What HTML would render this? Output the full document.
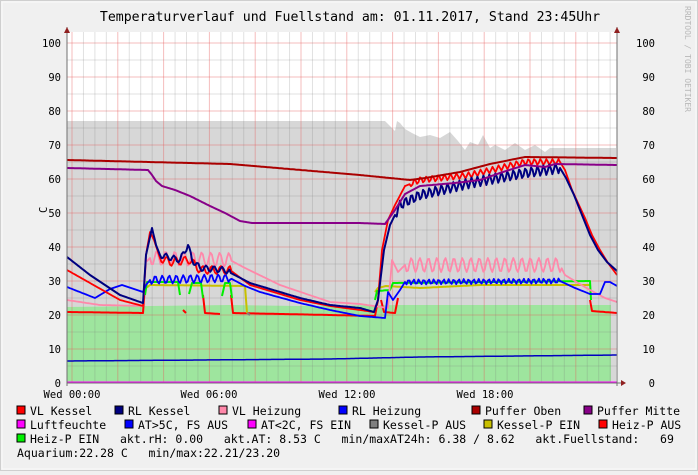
<!DOCTYPE html>
<html><head><meta charset="utf-8"><style>
html,body{margin:0;padding:0;background:#f0f0f0;}
body{width:698px;height:471px;overflow:hidden;position:relative;font-family:"DejaVu Sans Mono","Liberation Mono",monospace;}
svg text{font-family:"DejaVu Sans Mono","Liberation Mono",monospace;white-space:pre;}
</style></head><body>
<svg id="g" width="698" height="471" xmlns="http://www.w3.org/2000/svg">
<rect x="0" y="0" width="698" height="471" fill="#f0f0f0"/>
<rect x="0.5" y="0.5" width="697" height="470" fill="none" stroke="#cfcfcf"/>
<rect x="2" y="2" width="694" height="467" fill="none" stroke="#fafafa"/>
<text x="350" y="21" font-size="13.2" text-anchor="middle" fill="#000">Temperaturverlauf und Fuellstand am: 01.11.2017, Stand 23:45Uhr</text>
<text transform="translate(685,6) rotate(90)" font-size="8" fill="#b8b8b8">RRDTOOL / TOBI OETIKER</text>
<rect x="67" y="32" width="550" height="351" fill="#fff"/>
<g id="areas"></g>
<g id="grid"></g>
<g id="lines" fill="none" stroke-linejoin="round"></g>
<line x1="67" y1="383" x2="622" y2="383" stroke="#707070"/>
<line x1="67" y1="27" x2="67" y2="386" stroke="#707070"/>
<line x1="617" y1="27" x2="617" y2="386" stroke="#707070"/>
<polygon points="64,33 70,33 67,27" fill="#902020"/>
<polygon points="614,33 620,33 617,27" fill="#902020"/>
<polygon points="621,380 621,386 626,383" fill="#902020"/>
<g id="labels" font-size="10.5" fill="#000"></g>
<text x="38" y="210" font-size="10.5" transform="rotate(-90,44,207)">C</text>
<g font-size="10.5"><text x="72" y="398" text-anchor="middle">Wed 00:00</text><text x="209" y="398" text-anchor="middle">Wed 06:00</text><text x="347" y="398" text-anchor="middle">Wed 12:00</text><text x="485" y="398" text-anchor="middle">Wed 18:00</text></g>
<g id="legend" font-size="11.5" fill="#000"></g>
</svg>
<script>
var NS="http://www.w3.org/2000/svg";
function el(p,t,a){var e=document.createElementNS(NS,t);for(var k in a)e.setAttribute(k,a[k]);p.appendChild(e);return e;}
var Y=function(v){return 383-3.4*v;};
var grid=document.getElementById('grid');
for(var v=0;v<=100;v+=5){var y=Y(v);el(grid,'line',{x1:67,x2:617,y1:y,y2:y,stroke:v%10==0?'rgba(230,90,90,0.4)':'rgba(120,120,120,0.22)','stroke-width':1});}
for(var i=-1;i<50;i++){var x=72+i*11.45;if(x<67||x>617)continue;el(grid,'line',{x1:x,x2:x,y1:32,y2:383,stroke:i%4==0?'rgba(230,90,90,0.4)':'rgba(120,120,120,0.22)','stroke-width':1});}
var lab=document.getElementById('labels');
for(var v=0;v<=100;v+=10){var y=Y(v)+4;var t=el(lab,'text',{x:61,y:y,'text-anchor':'end'});t.textContent=v;var t2=el(lab,'text',{x:655,y:y,'text-anchor':'end'});t2.textContent=v;}
var ar=document.getElementById('areas');
var gp="67,383 67,121 ";
var gpts=[[385,121],[392,128],[395,131],[397,121],[400,123],[405,129],[412,133],[420,137],[430,135],[440,138],[450,132],[458,141],[465,150],[470,142],[478,145],[483,135],[490,148],[495,145],[505,150],[515,143],[525,150],[535,145],[545,152],[550,148],[555,148],[616,148],[616,383]];
gpts.forEach(function(p){gp+=p[0]+","+p[1]+" ";});
el(ar,'polygon',{points:gp,fill:'#d7d7d7'});
el(ar,'polygon',{points:"67,383 67,307 150,306 230,305 300,306 400,305 460,305 560,305 611,305 611,383",fill:'#9ee59e'});
var L=document.getElementById('lines');
function pl(pts,col,w,osc){
 var out=[];
 for(var i=0;i<pts.length-1;i++){var a=pts[i],b=pts[i+1];var n=Math.max(1,Math.round((b[0]-a[0])/1.5));
  for(var j=0;j<n;j++){var t=j/n;var x=a[0]+(b[0]-a[0])*t,y=a[1]+(b[1]-a[1])*t;
   if(osc)osc.forEach(function(o){if(x>=o[0]&&x<=o[1])y+=o[2]*Math.sin((x-o[0])/o[3]*2*Math.PI);});
   out.push(x.toFixed(1)+","+y.toFixed(1));}}
 var l=pts[pts.length-1];out.push(l[0]+","+l[1]);
 el(L,'polyline',{points:out.join(" "),stroke:col,'stroke-width':w||1.6});
}
pl([[67,361],[200,360],[330,359],[420,357],[617,355]],'#0000c0',1.5);
el(L,'line',{x1:67,x2:617,y1:382.5,y2:382.5,stroke:'#ff00ff','stroke-width':2});
pl([[67,312],[143,313],[145,285]],'#ff0000',2);
pl([[183,310],[186,313]],'#ff0000',2);
pl([[203,295],[205,313],[220,314]],'#ff0000',2);
pl([[231,295],[233,313],[330,315],[375,316],[378,300]],'#ff0000',2);
pl([[381,300],[384,312],[395,313],[398,298]],'#ff0000',2);
pl([[590,300],[592,311],[617,313]],'#ff0000',2);
pl([[146,288],[150,285],[245,286],[247,313]],'#c8c000',2);
pl([[375,292],[378,288],[386,286],[420,288],[480,285],[560,285],[590,285]],'#c8c000',2);
el(L,'line',{x1:247,x2:250,y1:313,y2:315,stroke:'#808080','stroke-width':2});
pl([[145,295],[147,282],[178,282],[180,295]],'#00f000',2);
pl([[189,294],[192,283],[201,283],[203,298]],'#00f000',2);
pl([[222,296],[225,283],[230,283],[232,298]],'#00f000',2);
pl([[375,300],[377,291],[390,290],[393,283],[590,281],[591,300]],'#00f000',2);
pl([[67,300],[100,305],[143,306],[146,262],[150,258],[230,260],[245,268],[280,285],[330,302],[360,304],[388,308],[392,260],[398,272],[405,265],[560,265],[565,275],[578,283],[590,290],[605,298],[617,302]],'#ff88aa',1.8,[[150,230,7,9],[405,560,7,8.5]]);
pl([[67,287],[95,298],[110,289],[122,285],[143,292],[146,285],[150,280],[230,278],[245,286],[260,292],[300,303],[330,310],[360,316],[385,318],[388,292],[393,300],[400,290],[405,282],[560,281],[575,288],[590,294],[600,294],[605,282],[610,282],[617,286]],'#0000ff',1.8,[[150,230,4,7],[405,560,2.5,5]]);
pl([[67,270],[90,283],[120,300],[143,306],[146,255],[150,232],[154,240],[160,258],[170,262],[190,260],[200,270],[230,270],[250,285],[300,300],[330,306],[360,310],[374,312],[378,300],[382,250],[388,220],[395,205],[405,186],[420,180],[470,175],[500,168],[525,162],[560,162],[565,170],[572,190],[578,203],[585,218],[592,235],[600,250],[608,263],[617,275]],'#ff0000',1.8,[[160,230,4,9],[410,560,3,6]]);
pl([[67,257],[90,275],[120,295],[143,303],[146,255],[152,228],[156,245],[160,255],[180,260],[188,245],[192,260],[200,268],[225,270],[250,283],[300,298],[330,305],[360,308],[374,312],[378,300],[384,250],[390,225],[395,215],[400,205],[420,195],[470,183],[525,173],[560,168],[566,178],[574,195],[582,215],[590,235],[598,250],[607,262],[617,271]],'#000080',2,[[160,230,3,8],[395,560,5,6]]);
pl([[67,160],[230,164],[360,175],[410,180],[425,178],[460,172],[490,164],[525,157],[617,158]],'#aa0000',2);
pl([[67,168],[148,170],[152,175],[156,181],[162,186],[175,190],[190,196],[210,206],[225,213],[240,221],[252,223],[360,223],[385,224],[395,210],[405,194],[420,186],[455,183],[480,180],[500,173],[525,165],[545,167],[555,164],[617,165]],'#880088',2);
var lg=document.getElementById('legend');
function item(bx,y,col,txt){if(col){el(lg,'rect',{x:bx,y:y-9,width:8,height:8,fill:col,stroke:'#000','stroke-width':1});}var t=el(lg,'text',{x:bx+13,y:y});t.textContent=txt;}
item(17,415,'#ff0000','VL Kessel');item(115,415,'#000080','RL Kessel');item(219,415,'#ff88aa','VL Heizung');item(339,415,'#0000ff','RL Heizung');item(472,415,'#aa0000','Puffer Oben');item(584,415,'#880088','Puffer Mitte');
item(17,429,'#ff00ff','Luftfeuchte');item(125,429,'#0000ff','AT>5C, FS AUS');item(248,429,'#ff00ff','AT<2C, FS EIN');item(370,429,'#808080','Kessel-P AUS');item(484,429,'#c8c000','Kessel-P EIN');item(599,429,'#ff0000','Heiz-P AUS');
item(17,443,'#00f000','Heiz-P EIN   akt.rH: 0.00   akt.AT: 8.53 C   min/maxAT24h: 6.38 / 8.62   akt.Fuellstand:   69');
var t=el(lg,'text',{x:17,y:457});t.textContent='Aquarium:22.28 C   min/max:22.21/23.20';
</script>
</body></html>
